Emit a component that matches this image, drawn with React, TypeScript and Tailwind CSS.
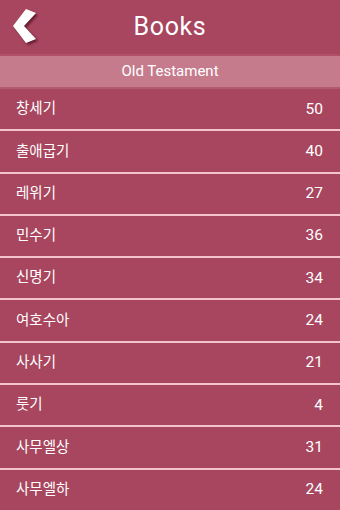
import React from 'react';

const BOOKS = [
  { name: '창세기', chapters: 50 },
  { name: '출애굽기', chapters: 40 },
  { name: '레위기', chapters: 27 },
  { name: '민수기', chapters: 36 },
  { name: '신명기', chapters: 34 },
  { name: '여호수아', chapters: 24 },
  { name: '사사기', chapters: 21 },
  { name: '룻기', chapters: 4 },
  { name: '사무엘상', chapters: 31 },
  { name: '사무엘하', chapters: 24 },
];

const BackChevron = () => (
  <svg width="26" height="34" viewBox="0 0 26 34" className="drop-shadow-[2px_2px_1px_rgba(60,0,20,0.6)]">
    <polygon points="13,0 23,4 11,17 23,30 13,34 0,17" fill="#ffffff" />
  </svg>
);

export default function App() {
  return (
    <div
      className="w-[340px] h-[510px] overflow-hidden bg-[#a7465e] text-white"
      style={{ fontFamily: 'Roboto, "Noto Sans CJK KR", sans-serif' }}
    >
      {/* Header */}
      <div className="relative h-[56px] flex items-center justify-center border-b-2 border-[#b14f67]">
        <button className="absolute left-[13px] top-[9px]" aria-label="Back">
          <BackChevron />
        </button>
        <h1 className="text-[25px] tracking-wide">Books</h1>
      </div>

      {/* Section */}
      <div className="h-[33px] flex items-center justify-center bg-[#c57b8c] border-b-2 border-[#b45a70] text-[15px]">
        Old Testament
      </div>

      {/* List */}
      <div>
        {BOOKS.map((book) => (
          <div
            key={book.name}
            className="h-[42.3px] flex items-center justify-between pl-[16px] pr-[17px] border-b-2 border-[#f3c4cc]"
          >
            <span className="text-[14.5px]">{book.name}</span>
            <span className="text-[15.5px]">{book.chapters}</span>
          </div>
        ))}
      </div>
    </div>
  );
}
